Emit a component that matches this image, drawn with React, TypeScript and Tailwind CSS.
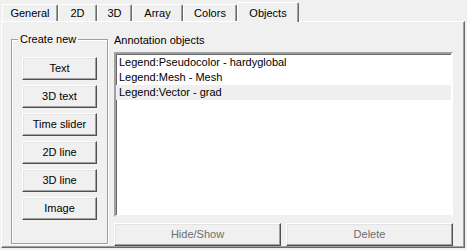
import React from "react";

// tab strip: General .. Objects, Objects is active
const TABS = [
  { label: "General", w: "w-[56px]" },
  { label: "2D", w: "w-[39px]" },
  { label: "3D", w: "w-[35px]" },
  { label: "Array", w: "w-[51px]" },
  { label: "Colors", w: "w-[54px]" },
];

const CREATE = ["Text", "3D text", "Time slider", "2D line", "3D line", "Image"];

const OBJECTS = [
  "Legend:Pseudocolor - hardyglobal",
  "Legend:Mesh - Mesh",
  "Legend:Vector - grad",
];

function Tab({ label, w }: { label: string; w: string }) {
  return (
    <div
      className={`${w} h-[17px] flex items-center justify-center border-t border-l border-white border-r border-r-[#696969] rounded-t-[2px] shadow-[inset_-1px_0_0_#a0a0a0] leading-[13px] pt-[1px]`}
    >
      {label}
    </div>
  );
}

function WinButton({
  label,
  className,
  disabled,
}: {
  label: string;
  className: string;
  disabled?: boolean;
}) {
  return (
    <button
      className={`${className} flex items-center justify-center bg-[#f0f0f0] border border-t-white border-l-white border-r-[#505050] border-b-[#505050] shadow-[inset_-1px_-1px_0_#a0a0a0,inset_1px_1px_0_#e3e3e3] leading-[13px] ${
        disabled ? "text-[#6d6d6d]" : "text-black"
      }`}
    >
      {label}
    </button>
  );
}

export default function App() {
  return (
    <div
      className="w-[467px] h-[250px] bg-[#f0f0f0] text-black text-[11px] overflow-hidden"
      style={{ fontFamily: '"Liberation Sans", Arial, sans-serif' }}
    >
      {/* tabs */}
      <div className="flex items-end h-[21px] pl-[2px]">
        {TABS.map((t) => (
          <Tab key={t.label} label={t.label} w={t.w} />
        ))}
        <div className="relative z-10 -mb-[1px] w-[62px] h-[20px] bg-[#f0f0f0] flex items-start justify-center pt-[4px] border-t border-l border-white border-r border-r-[#696969] rounded-t-[2px] shadow-[inset_-1px_0_0_#a0a0a0] leading-[13px]">
          Objects
        </div>
      </div>

      {/* panel */}
      <div className="ml-[1px] w-[464px] h-[227px] border-t border-l border-white border-r border-r-[#696969] border-b border-b-[#696969] shadow-[inset_-1px_-1px_0_#a0a0a0] flex gap-[6px] pt-[11px] pl-[9px]">
        <fieldset className="w-[97px] h-[211px] border border-[#a0a0a0] shadow-[inset_1px_1px_0_#fff,1px_1px_0_#fff] flex flex-col items-center">
          <legend className="ml-[6px] px-[2px] leading-[13px]">Create new</legend>
          <div className="mt-[11px] flex flex-col gap-[5px]">
            {CREATE.map((c) => (
              <WinButton key={c} label={c} className="w-[75px] h-[23px]" />
            ))}
          </div>
        </fieldset>

        <div className="w-[339px] flex flex-col">
          <div className="leading-[13px] mt-[1px]">Annotation objects</div>
          <div className="mt-[5px] h-[165px] bg-white border-2 border-t-[#a0a0a0] border-l-[#a0a0a0] border-r-white border-b-[#f0f0f0] shadow-[inset_1px_1px_0_#696969] pt-[1px]">
            {OBJECTS.map((o, i) => (
              <div
                key={o}
                className={`h-[15px] leading-[15px] pl-[3px] ${
                  i === 2 ? "bg-[#efefef]" : ""
                }`}
              >
                {o}
              </div>
            ))}
          </div>
          <div className="mt-[6px] flex gap-[5px]">
            <WinButton label="Hide/Show" className="w-[167px] h-[23px]" disabled />
            <WinButton label="Delete" className="w-[167px] h-[23px]" disabled />
          </div>
        </div>
      </div>
    </div>
  );
}
